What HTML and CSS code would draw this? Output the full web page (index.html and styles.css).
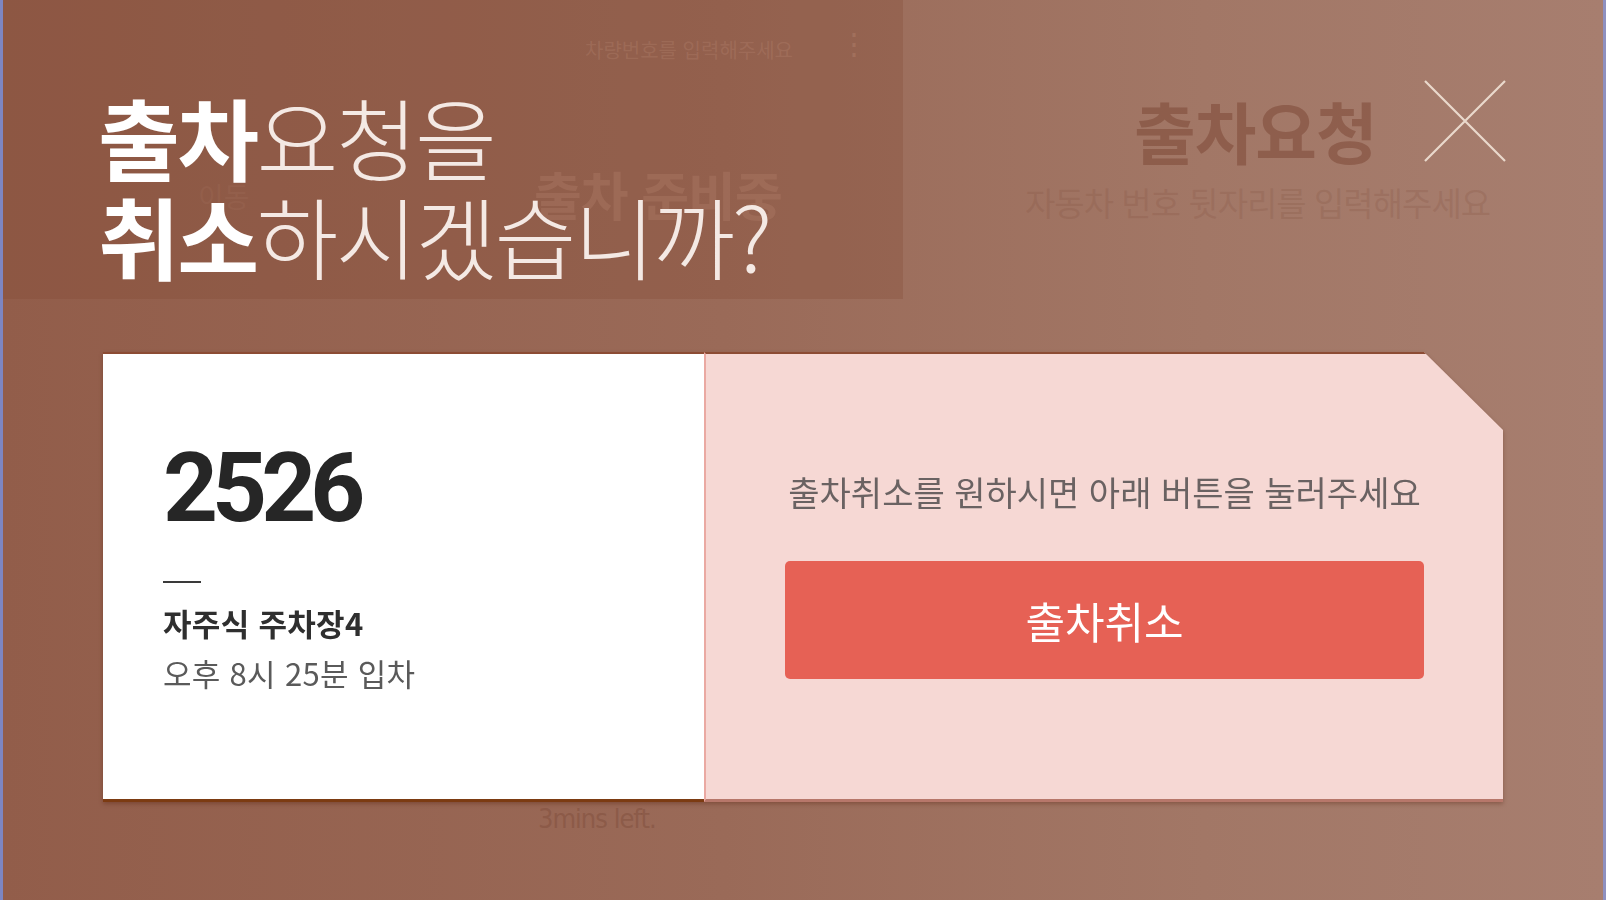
FILE: index.html
```html
<!DOCTYPE html>
<html lang="ko">
<head>
<meta charset="utf-8">
<title>출차요청 취소</title>
<link rel="stylesheet" href="styles.css">
</head>
<body>
<div class="screen">
  <div class="ghost-panel"></div>
  <div class="ghost ghost-top">차량번호를 입력해주세요</div>
  <div class="ghost ghost-dots">⋮</div>
  <div class="ghost ghost-ready">출차 준비중</div>
  <div class="ghost ghost-move">이동</div>
  <div class="ghost ghost-req">출차요청</div>
  <div class="ghost ghost-hint">자동차 번호 뒷자리를 입력해주세요</div>
  <div class="ghost ghost-left">3mins left.</div>

  <header class="header">
    <h1 class="title">
      <span class="line"><b>출차</b>요청을</span>
      <span class="line"><b>취소</b>하시겠습니까?</span>
    </h1>
    <button class="close" aria-label="닫기">
      <svg width="82" height="82" viewBox="0 0 82 82"><path d="M1 1 L81 81 M81 1 L1 81" stroke="#ead9cc" stroke-width="2.2" fill="none"/></svg>
    </button>
  </header>

  <section class="card">
    <div class="info">
      <div class="plate">2526</div>
      <div class="dash"></div>
      <div class="lot">자주식 주차장4</div>
      <div class="time">오후 8시 25분 입차</div>
    </div>
    <div class="action">
      <p class="guide">출차취소를 원하시면 아래 버튼을 눌러주세요</p>
      <button class="cancel">출차취소</button>
    </div>
  </section>
</div>
</body>
</html>
```
FILE: styles.css
```css
* { box-sizing: border-box; }
html, body { margin: 0; padding: 0; }
body {
  width: 1606px;
  height: 900px;
  overflow: hidden;
  font-family: "Noto Sans CJK KR", "Noto Sans", sans-serif;
}
.screen {
  position: relative;
  width: 1606px;
  height: 900px;
  border-left: 3px solid #7d86c2;
  border-right: 3px solid #8e90bf;
  background: linear-gradient(90deg, #925d4a 0%, #9a6a58 45%, #a27766 75%, #a77e6f 100%);
  overflow: hidden;
}
.ghost-panel {
  position: absolute;
  left: 0; top: 0;
  width: 900px; height: 299px;
  background: rgba(128, 72, 52, 0.28);
}
.ghost {
  position: absolute;
  white-space: nowrap;
  font-family: "Noto Sans CJK KR", sans-serif;
}
.ghost-top { left: 582px; top: 35px; font-size: 20px; color: rgba(175, 125, 105, 0.4); }
.ghost-dots { left: 836px; top: 26px; font-size: 30px; line-height: 1; color: rgba(175, 125, 105, 0.5); }
.ghost-ready { left: 531px; top: 156px; font-size: 52px; font-weight: 700; color: rgba(170, 120, 100, 0.45); letter-spacing: -1px; }
.ghost-move { left: 195px; top: 176px; font-size: 28px; color: rgba(165, 115, 95, 0.22); }
.ghost-req { left: 1131px; top: 81px; font-size: 67px; font-weight: 700; color: rgba(125, 72, 55, 0.55); letter-spacing: -1px; }
.ghost-hint { left: 1022px; top: 178px; font-size: 33px; color: rgba(130, 80, 62, 0.22); letter-spacing: -1px; }
.ghost-left { left: 535px; top: 803px; font-size: 27px; font-family: "Liberation Sans Narrow", "DejaVu Sans Condensed", "Liberation Sans", sans-serif; color: rgba(120, 70, 52, 0.4); letter-spacing: -1px; }

.header {
  position: relative;
  display: flex;
  justify-content: space-between;
  align-items: flex-start;
  padding: 86px 97px 0 95px;
  height: 352px;
}
.title {
  margin: 0;
  font-size: 89px;
  line-height: 99px;
  font-weight: 300;
  letter-spacing: -2.6px;
  color: #f4e9e4;
}
.title .line { display: block; }
.title b { font-weight: 700; color: #ffffff; }
.close {
  margin-top: -6px;
  padding: 0;
  border: 0;
  background: none;
  width: 82px;
  height: 82px;
}
.close svg { display: block; }

.card {
  position: relative;
  display: flex;
  margin-left: 100px;
  width: 1400px;
  height: 450px;
  filter: drop-shadow(0 2px 2px rgba(80, 30, 10, 0.35));
}
.info {
  width: 601px;
  background: #ffffff;
  border-top: 2px solid #8c4c34;
  border-bottom: 3px solid #7c3b12;
  padding: 84px 0 0 60px;
}
.plate {
  font-family: Roboto, "Liberation Sans", sans-serif;
  font-weight: 700;
  font-size: 96px;
  line-height: 100px;
  letter-spacing: -6px;
  color: #262626;
}
.dash {
  width: 38px;
  height: 2px;
  background: #3a3a3a;
  margin-top: 43px;
}
.lot {
  margin-top: 19px;
  font-size: 31px;
  line-height: 42px;
  font-weight: 700;
  letter-spacing: 0.3px;
  color: #2f2f2f;
}
.time {
  margin-top: 8px;
  font-size: 31px;
  line-height: 42px;
  font-weight: 400;
  letter-spacing: 0.3px;
  color: #5a5a5a;
}
.action {
  flex: 1;
  display: flex;
  flex-direction: column;
  align-items: center;
  background: #f6d8d4;
  border-left: 2px solid #eaa9a2;
  border-top: 2px solid #8c4c34;
  border-bottom: 3px solid #b7776a;
  clip-path: polygon(0 0, 720px 0, 100% 78px, 100% 100%, 0 100%);
  padding-top: 117px;
}
.guide {
  margin: 0;
  font-size: 34px;
  line-height: 42px;
  letter-spacing: 0;
  color: #6a6262;
}
.cancel {
  margin-top: 48px;
  width: 639px;
  height: 118px;
  border: 0;
  border-radius: 5px;
  background: #e66155;
  color: #ffffff;
  font-family: "Noto Sans CJK KR", sans-serif;
  font-size: 43px;
  letter-spacing: 0;
  font-weight: 400;
}
```
